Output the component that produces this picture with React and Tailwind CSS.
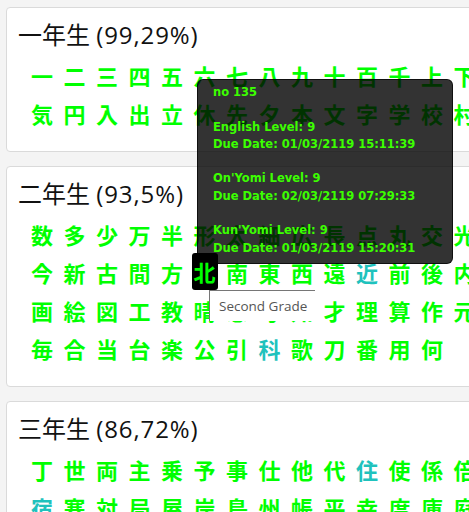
import React from "react";

const grades = [
  {
    title: "一年生",
    pct: "99,29%",
    rows: [
      "一二三四五六七八九十百千上下左",
      "気円入出立休先夕本文字学校村林",
    ],
  },
  {
    title: "二年生",
    pct: "93,5%",
    rows: [
      "数多少万半形太細広長点丸交光角",
      "今新古間方北南東西遠近前後内外",
      "画絵図工教晴思考知才理算作元声",
      "毎合当台楽公引科歌刀番用何",
    ],
  },
  {
    title: "三年生",
    pct: "86,72%",
    rows: [
      "丁世両主乗予事仕他代住使係倍具",
      "宿寒対局屋岸島州帳平幸度庫庭式",
    ],
  },
];

// kanji shown in teal instead of green
const teal = ["近", "科", "住", "宿"];

function Kanji({ ch, active }) {
  if (active) {
    return (
      <span className="relative z-20 w-[26px] h-[37px] shrink-0 rounded-[3px] bg-black text-center leading-[37px] text-[#00ff00]">
        {ch}
      </span>
    );
  }
  return (
    <span
      className={`w-[26px] shrink-0 text-center leading-[38px] ${teal.includes(ch) ? "text-[#1fc2bd]" : "text-[#00ff00]"}`}
    >
      {ch}
    </span>
  );
}

function GradeCard({ grade }) {
  return (
    <div className="w-[1340px] rounded-[4px] border border-[#dadada] bg-white px-[11px] pt-[12px] pb-[19px]">
      <div className="font-['Open_Sans','Noto_Sans_CJK_JP',sans-serif] text-[24px] leading-[30px] text-[#111]">
        {grade.title} <span className="tracking-[0.9px]">({grade.pct})</span>
      </div>
      <div className="mt-[6px] pl-[11px] flex flex-col font-['Noto_Sans_CJK_JP',sans-serif] font-bold text-[22px]">
        {grade.rows.map((row, r) => (
          <div key={r} className="flex gap-x-[6.5px]">
            {[...row].map((ch, i) => (
              <Kanji key={i} ch={ch} active={ch === "北"} />
            ))}
          </div>
        ))}
      </div>
    </div>
  );
}

export default function App() {
  return (
    <div className="relative w-[469px] h-[512px] overflow-hidden bg-[#f4f4f4]">
      <div className="flex flex-col gap-[14px] pl-[6px] pt-[7px]">
        {grades.map((g) => (
          <GradeCard key={g.title} grade={g} />
        ))}
      </div>

      {/* hover details */}
      <div className="absolute left-[197px] top-[79px] z-10 w-[256px] rounded-[6px] border border-black/70 bg-black/80 pl-[15px] pt-[4px] pb-[6px] font-['DejaVu_Sans',Verdana,sans-serif] font-bold text-[11.5px] leading-[17.3px] text-[#3cff00]">
        <div>no 135</div>
        <div>&nbsp;</div>
        <div>English Level: 9</div>
        <div>Due Date: 01/03/2119 15:11:39</div>
        <div>&nbsp;</div>
        <div>On'Yomi Level: 9</div>
        <div>Due Date: 02/03/2119 07:29:33</div>
        <div>&nbsp;</div>
        <div>Kun'Yomi Level: 9</div>
        <div>Due Date: 01/03/2119 15:20:31</div>
      </div>

      {/* title tooltip of the hovered kanji */}
      <div className="absolute left-[209px] top-[290px] z-30 w-[106px] h-[31px] bg-white border-t border-l border-[#767676] pl-[9px] font-['Open_Sans',sans-serif] text-[13.5px] leading-[30px] text-[#555]">
        Second Grade
      </div>
    </div>
  );
}
